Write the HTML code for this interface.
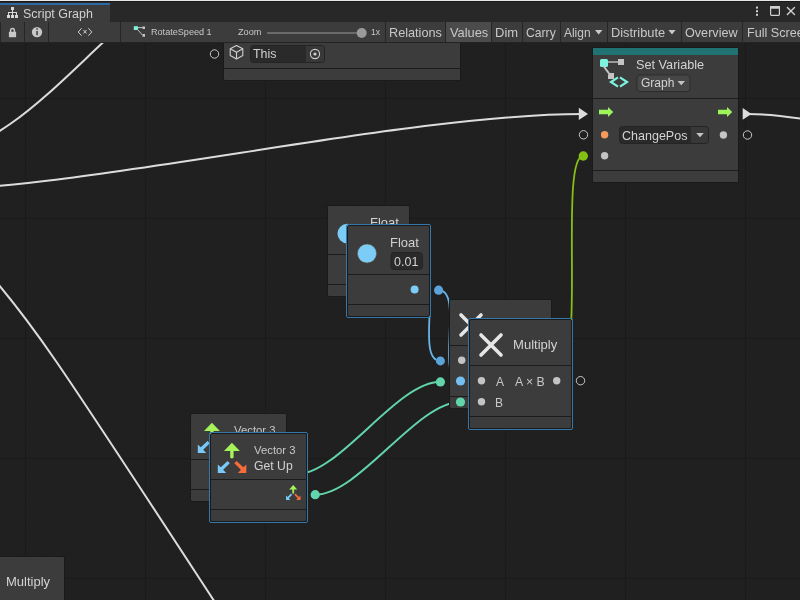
<!DOCTYPE html>
<html><head><meta charset="utf-8">
<style>
*{margin:0;padding:0;box-sizing:border-box}
html,body{width:800px;height:600px;overflow:hidden;background:#202020;font-family:"Liberation Sans",sans-serif;color:#c8c8c8}
.a{position:absolute}
.t{position:absolute;white-space:nowrap;line-height:1;will-change:transform}
svg{position:absolute;left:0;top:0}
.node{position:absolute;background:#3c3c3c;border:1px solid #1a1a1a;border-radius:2px}
.sel{position:absolute;border:1px solid #3479a9;border-radius:2px}
.div{position:absolute;left:0;right:0;height:1px;background:#1c1c1c}
</style></head><body>
<svg width="800" height="600">
<rect x="1" y="0" width="1" height="600" fill="#1f1f1f"/>
<rect x="13" y="0" width="1" height="600" fill="#1f1f1f"/>
<rect x="25" y="0" width="1" height="600" fill="#1a1a1a"/>
<rect x="37" y="0" width="1" height="600" fill="#1f1f1f"/>
<rect x="49" y="0" width="1" height="600" fill="#1f1f1f"/>
<rect x="61" y="0" width="1" height="600" fill="#1f1f1f"/>
<rect x="73" y="0" width="1" height="600" fill="#1f1f1f"/>
<rect x="85" y="0" width="1" height="600" fill="#1f1f1f"/>
<rect x="97" y="0" width="1" height="600" fill="#1f1f1f"/>
<rect x="109" y="0" width="1" height="600" fill="#1f1f1f"/>
<rect x="121" y="0" width="1" height="600" fill="#1f1f1f"/>
<rect x="133" y="0" width="1" height="600" fill="#1f1f1f"/>
<rect x="145" y="0" width="1" height="600" fill="#1a1a1a"/>
<rect x="157" y="0" width="1" height="600" fill="#1f1f1f"/>
<rect x="169" y="0" width="1" height="600" fill="#1f1f1f"/>
<rect x="181" y="0" width="1" height="600" fill="#1f1f1f"/>
<rect x="193" y="0" width="1" height="600" fill="#1f1f1f"/>
<rect x="205" y="0" width="1" height="600" fill="#1f1f1f"/>
<rect x="217" y="0" width="1" height="600" fill="#1f1f1f"/>
<rect x="229" y="0" width="1" height="600" fill="#1f1f1f"/>
<rect x="241" y="0" width="1" height="600" fill="#1f1f1f"/>
<rect x="253" y="0" width="1" height="600" fill="#1f1f1f"/>
<rect x="265" y="0" width="1" height="600" fill="#1a1a1a"/>
<rect x="277" y="0" width="1" height="600" fill="#1f1f1f"/>
<rect x="289" y="0" width="1" height="600" fill="#1f1f1f"/>
<rect x="301" y="0" width="1" height="600" fill="#1f1f1f"/>
<rect x="313" y="0" width="1" height="600" fill="#1f1f1f"/>
<rect x="325" y="0" width="1" height="600" fill="#1f1f1f"/>
<rect x="337" y="0" width="1" height="600" fill="#1f1f1f"/>
<rect x="349" y="0" width="1" height="600" fill="#1f1f1f"/>
<rect x="361" y="0" width="1" height="600" fill="#1f1f1f"/>
<rect x="373" y="0" width="1" height="600" fill="#1f1f1f"/>
<rect x="385" y="0" width="1" height="600" fill="#1a1a1a"/>
<rect x="397" y="0" width="1" height="600" fill="#1f1f1f"/>
<rect x="409" y="0" width="1" height="600" fill="#1f1f1f"/>
<rect x="421" y="0" width="1" height="600" fill="#1f1f1f"/>
<rect x="433" y="0" width="1" height="600" fill="#1f1f1f"/>
<rect x="445" y="0" width="1" height="600" fill="#1f1f1f"/>
<rect x="457" y="0" width="1" height="600" fill="#1f1f1f"/>
<rect x="469" y="0" width="1" height="600" fill="#1f1f1f"/>
<rect x="481" y="0" width="1" height="600" fill="#1f1f1f"/>
<rect x="493" y="0" width="1" height="600" fill="#1f1f1f"/>
<rect x="505" y="0" width="1" height="600" fill="#1a1a1a"/>
<rect x="517" y="0" width="1" height="600" fill="#1f1f1f"/>
<rect x="529" y="0" width="1" height="600" fill="#1f1f1f"/>
<rect x="541" y="0" width="1" height="600" fill="#1f1f1f"/>
<rect x="553" y="0" width="1" height="600" fill="#1f1f1f"/>
<rect x="565" y="0" width="1" height="600" fill="#1f1f1f"/>
<rect x="577" y="0" width="1" height="600" fill="#1f1f1f"/>
<rect x="589" y="0" width="1" height="600" fill="#1f1f1f"/>
<rect x="601" y="0" width="1" height="600" fill="#1f1f1f"/>
<rect x="613" y="0" width="1" height="600" fill="#1f1f1f"/>
<rect x="625" y="0" width="1" height="600" fill="#1a1a1a"/>
<rect x="637" y="0" width="1" height="600" fill="#1f1f1f"/>
<rect x="649" y="0" width="1" height="600" fill="#1f1f1f"/>
<rect x="661" y="0" width="1" height="600" fill="#1f1f1f"/>
<rect x="673" y="0" width="1" height="600" fill="#1f1f1f"/>
<rect x="685" y="0" width="1" height="600" fill="#1f1f1f"/>
<rect x="697" y="0" width="1" height="600" fill="#1f1f1f"/>
<rect x="709" y="0" width="1" height="600" fill="#1f1f1f"/>
<rect x="721" y="0" width="1" height="600" fill="#1f1f1f"/>
<rect x="733" y="0" width="1" height="600" fill="#1f1f1f"/>
<rect x="745" y="0" width="1" height="600" fill="#1a1a1a"/>
<rect x="757" y="0" width="1" height="600" fill="#1f1f1f"/>
<rect x="769" y="0" width="1" height="600" fill="#1f1f1f"/>
<rect x="781" y="0" width="1" height="600" fill="#1f1f1f"/>
<rect x="793" y="0" width="1" height="600" fill="#1f1f1f"/>
<rect x="0" y="2" width="800" height="1" fill="#1f1f1f"/>
<rect x="0" y="14" width="800" height="1" fill="#1f1f1f"/>
<rect x="0" y="26" width="800" height="1" fill="#1f1f1f"/>
<rect x="0" y="38" width="800" height="1" fill="#1f1f1f"/>
<rect x="0" y="50" width="800" height="1" fill="#1f1f1f"/>
<rect x="0" y="62" width="800" height="1" fill="#1f1f1f"/>
<rect x="0" y="74" width="800" height="1" fill="#1f1f1f"/>
<rect x="0" y="86" width="800" height="1" fill="#1f1f1f"/>
<rect x="0" y="98" width="800" height="1" fill="#1a1a1a"/>
<rect x="0" y="110" width="800" height="1" fill="#1f1f1f"/>
<rect x="0" y="122" width="800" height="1" fill="#1f1f1f"/>
<rect x="0" y="134" width="800" height="1" fill="#1f1f1f"/>
<rect x="0" y="146" width="800" height="1" fill="#1f1f1f"/>
<rect x="0" y="158" width="800" height="1" fill="#1f1f1f"/>
<rect x="0" y="170" width="800" height="1" fill="#1f1f1f"/>
<rect x="0" y="182" width="800" height="1" fill="#1f1f1f"/>
<rect x="0" y="194" width="800" height="1" fill="#1f1f1f"/>
<rect x="0" y="206" width="800" height="1" fill="#1f1f1f"/>
<rect x="0" y="218" width="800" height="1" fill="#1a1a1a"/>
<rect x="0" y="230" width="800" height="1" fill="#1f1f1f"/>
<rect x="0" y="242" width="800" height="1" fill="#1f1f1f"/>
<rect x="0" y="254" width="800" height="1" fill="#1f1f1f"/>
<rect x="0" y="266" width="800" height="1" fill="#1f1f1f"/>
<rect x="0" y="278" width="800" height="1" fill="#1f1f1f"/>
<rect x="0" y="290" width="800" height="1" fill="#1f1f1f"/>
<rect x="0" y="302" width="800" height="1" fill="#1f1f1f"/>
<rect x="0" y="314" width="800" height="1" fill="#1f1f1f"/>
<rect x="0" y="326" width="800" height="1" fill="#1f1f1f"/>
<rect x="0" y="338" width="800" height="1" fill="#1a1a1a"/>
<rect x="0" y="350" width="800" height="1" fill="#1f1f1f"/>
<rect x="0" y="362" width="800" height="1" fill="#1f1f1f"/>
<rect x="0" y="374" width="800" height="1" fill="#1f1f1f"/>
<rect x="0" y="386" width="800" height="1" fill="#1f1f1f"/>
<rect x="0" y="398" width="800" height="1" fill="#1f1f1f"/>
<rect x="0" y="410" width="800" height="1" fill="#1f1f1f"/>
<rect x="0" y="422" width="800" height="1" fill="#1f1f1f"/>
<rect x="0" y="434" width="800" height="1" fill="#1f1f1f"/>
<rect x="0" y="446" width="800" height="1" fill="#1f1f1f"/>
<rect x="0" y="458" width="800" height="1" fill="#1a1a1a"/>
<rect x="0" y="470" width="800" height="1" fill="#1f1f1f"/>
<rect x="0" y="482" width="800" height="1" fill="#1f1f1f"/>
<rect x="0" y="494" width="800" height="1" fill="#1f1f1f"/>
<rect x="0" y="506" width="800" height="1" fill="#1f1f1f"/>
<rect x="0" y="518" width="800" height="1" fill="#1f1f1f"/>
<rect x="0" y="530" width="800" height="1" fill="#1f1f1f"/>
<rect x="0" y="542" width="800" height="1" fill="#1f1f1f"/>
<rect x="0" y="554" width="800" height="1" fill="#1f1f1f"/>
<rect x="0" y="566" width="800" height="1" fill="#1f1f1f"/>
<rect x="0" y="578" width="800" height="1" fill="#1a1a1a"/>
<rect x="0" y="590" width="800" height="1" fill="#1f1f1f"/>
</svg>
<svg width="800" height="600" fill="none">
<path d="M-65.4,152.5 C0,152.8 61.3,78.6 122.7,24.6" stroke="#dcdcdc" stroke-width="2"/>
<path d="M-100.6,191.5 C82.6,191.5 399.8,114 583,114" stroke="#dcdcdc" stroke-width="2"/>
<path d="M748,114 C768,114 788,116.3 812,120.5" stroke="#dcdcdc" stroke-width="2"/>
<path d="M-20,263.4 C30.6,318.6 61.8,367.5 222.5,613.8" stroke="#dcdcdc" stroke-width="2"/>
<path d="M560.5,361 C584.5,361 559.3,156 583.3,156" stroke="#86bf14" stroke-width="1.8"/>
<path d="M418.6,269.6 C444.6,269.6 414.4,360.9 440.4,360.9" stroke="#68b4e8" stroke-width="1.8"/>
<path d="M438.6,290.2 C464.6,290.2 434.5,381 460.5,381" stroke="#68b4e8" stroke-width="1.8"/>
<path d="M295.6,474.5 C339.6,474.5 396.4,381.8 440.4,381.8" stroke="#62d6aa" stroke-width="2"/>
<path d="M315.2,494.7 C359.2,494.7 416.5,402 460.5,402" stroke="#62d6aa" stroke-width="2"/>
</svg>
<div class="node" style="left:327px;top:205px;width:83px;height:92px"><div class="div" style="top:48px"></div><div class="div" style="top:78px"></div></div>
<div class="node" style="left:449px;top:299px;width:103px;height:110px"><div class="div" style="top:45px"></div><div class="div" style="top:96px"></div></div>
<div class="node" style="left:190px;top:413px;width:97px;height:89px"><div class="div" style="top:45px"></div><div class="div" style="top:75px"></div></div>
<svg width="800" height="600"><circle cx="347.3" cy="233.6" r="9.8" fill="#7bcdf7"/><path d="M461,315 L481,335 M481,315 L461,335" stroke="#e6e6e6" stroke-width="3.6" stroke-linecap="round"/><circle cx="461.7" cy="360.3" r="3.7" fill="#c4c4c4"/><g><path d="M204,431 L211.9,422.7 L219.9,431 Z" fill="#a6f25a"/><path d="M210.2,430 L213.6,430 L213.6,437.5 Q211.9,439.5 210.2,437.5 Z" fill="#a6f25a"/><path d="M197.8,453 L197.8,444.5 L200.8,447.3 L207.5,441 L209.8,443.3 L203.2,449.8 L206.2,453 Z" fill="#78c9f8"/></g></svg><div class="t" style="left:370.00px;top:217.40px;font-size:12.96px;color:#d2d2d2;">Float</div>
<div class="t" style="left:234.30px;top:424.65px;font-size:10.6px;color:#c8c8c8;transform:scaleX(1.07);transform-origin:0 0;">Vector 3</div>
<svg width="800" height="600"><circle cx="438.6" cy="290.2" r="4.6" fill="#5ba3d9"/><circle cx="440.4" cy="360.9" r="4.5" fill="#5ba3d9"/><circle cx="460.5" cy="381" r="4.6" fill="#72bff0"/><circle cx="440.4" cy="381.9" r="4.6" fill="#62d6aa"/><circle cx="460.5" cy="402" r="4.6" fill="#62d6aa"/><circle cx="315.2" cy="494.7" r="4.6" fill="#62d6aa"/><circle cx="583.3" cy="156" r="4.7" fill="#86bf14"/></svg><div class="node" style="left:223px;top:19px;width:238px;height:62px"><div class="div" style="top:48px"></div></div>
<svg width="800" height="600"><circle cx="214.5" cy="54" r="4.2" fill="none" stroke="#c8c8c8" stroke-width="1"/></svg><div class="node" style="left:592px;top:47px;width:147px;height:136px"><div class="div" style="top:50px"></div><div class="div" style="top:122px"></div></div>
<div class="a" style="left:593px;top:48px;width:145px;height:7px;background:#217272;"></div>
<div class="sel" style="left:346px;top:224px;width:85px;height:94px"></div>
<div class="node" style="left:347px;top:225px;width:83px;height:92px"><div class="div" style="top:48px"></div><div class="div" style="top:78px"></div></div>
<div class="sel" style="left:468px;top:318px;width:105px;height:112px"></div>
<div class="node" style="left:469px;top:319px;width:103px;height:110px"><div class="div" style="top:45px"></div><div class="div" style="top:96px"></div></div>
<div class="sel" style="left:209px;top:432px;width:99px;height:91px"></div>
<div class="node" style="left:210px;top:433px;width:97px;height:89px"><div class="div" style="top:45px"></div><div class="div" style="top:75px"></div></div>
<div class="node" style="left:-4px;top:556px;width:69px;height:52px"></div>
<div class="t" style="left:6.30px;top:574.50px;font-size:13.03px;color:#d2d2d2;">Multiply</div>
<svg width="800" height="600">
<g fill="none" stroke="#d0d0d0" stroke-width="1.1" stroke-linejoin="round"><path d="M236.5,45.5 L242.8,48.8 L242.8,55.6 L236.5,58.9 L230.2,55.6 L230.2,48.8 Z"/><path d="M230.2,48.8 L236.5,52.2 L242.8,48.8 M236.5,52.2 L236.5,58.9"/></g>
<rect x="250.5" y="45.5" width="74" height="17" rx="3" fill="#2a2a2a" stroke="#242424" stroke-width="1"/>
<path d="M306,46 L321.5,46 Q324,46 324,48.5 L324,59.5 Q324,62 321.5,62 L306,62 Z" fill="#383838"/>
<circle cx="315" cy="54" r="4.6" fill="none" stroke="#d0d0d0" stroke-width="1.1"/>
<circle cx="315" cy="54" r="1.6" fill="#d0d0d0"/>
<rect x="600" y="59" width="8" height="8" rx="1.5" fill="#7df2dd"/>
<rect x="618" y="59" width="6" height="6" fill="#c4c4c4"/>
<path d="M608,62 L618,62" stroke="#c4c4c4" stroke-width="1.4"/>
<path d="M603.5,66 L610.5,75.5" stroke="#c4c4c4" stroke-width="2"/>
<path d="M608,75 L610,73 L614,73 L614,79 L608,79 Z" fill="#c4c4c4"/>
<path d="M618,77.4 L611,82 L618,86.6 M620,77.4 L627,82 L620,86.6" fill="none" stroke="#7df2dd" stroke-width="2.2"/>
<rect x="637" y="75" width="53" height="16.5" rx="3" fill="#464646" stroke="#2c2c2c" stroke-width="1"/>
<path d="M677.5,81 L685,81 L681.25,85.2 Z" fill="#c4c4c4"/>
<path d="M599,109.7 L608,109.7 L608,107 L613.2,112 L608,117 L608,114.3 L599,114.3 Z" fill="#9ef55a"/>
<path d="M718,109.7 L727,109.7 L727,107 L732.2,112 L727,117 L727,114.3 L718,114.3 Z" fill="#9ef55a"/>
<path d="M578.8,107.8 L588,114 L578.8,120 Z" fill="#dcdcdc"/>
<path d="M742.7,108 L751.5,114 L742.7,119.8 Z" fill="#dcdcdc"/>
<circle cx="583.5" cy="134.8" r="4.2" fill="none" stroke="#c8c8c8" stroke-width="1"/>
<circle cx="747.5" cy="135" r="4.2" fill="none" stroke="#c8c8c8" stroke-width="1"/>
<circle cx="604.6" cy="134.8" r="3.7" fill="#f59a5a"/>
<circle cx="604.6" cy="155.7" r="3.7" fill="#c4c4c4"/>
<circle cx="723.4" cy="135" r="3.7" fill="#c4c4c4"/>
<rect x="619.5" y="126.5" width="89" height="17" rx="3" fill="#2a2a2a" stroke="#242424" stroke-width="1"/>
<path d="M691,127 L705.5,127 Q708,127 708,129.5 L708,140.5 Q708,143 705.5,143 L691,143 Z" fill="#383838"/>
<path d="M696.2,133 L703.8,133 L700,137.3 Z" fill="#c4c4c4"/>
<circle cx="367" cy="253.5" r="9.6" fill="#7bcdf7" stroke="#5a4a3a" stroke-width="0.6"/>
<rect x="391" y="252.5" width="31.5" height="17" rx="3" fill="#2a2a2a" stroke="#242424" stroke-width="1"/>
<circle cx="414.6" cy="289.6" r="4" fill="#7bcdf7"/>
<path d="M481,335 L501,355 M501,335 L481,355" stroke="#e6e6e6" stroke-width="3.6" stroke-linecap="round"/>
<circle cx="481.5" cy="380.7" r="3.7" fill="#c4c4c4"/>
<circle cx="481.5" cy="401.7" r="3.7" fill="#c4c4c4"/>
<circle cx="556.7" cy="380.7" r="3.7" fill="#c4c4c4"/>
<circle cx="580.5" cy="380.7" r="4.2" fill="none" stroke="#c8c8c8" stroke-width="1"/>
<g><path d="M224,451 L231.9,442.7 L239.9,451 Z" fill="#a6f25a"/><path d="M230.2,450 L233.6,450 L233.6,457.5 Q231.9,459.5 230.2,457.5 Z" fill="#a6f25a"/><path d="M217.8,473 L217.8,464.5 L220.8,467.3 L227.5,461 L229.8,463.3 L223.2,469.8 L226.2,473 Z" fill="#78c9f8"/><path d="M246.3,473 L246.3,464.5 L243.3,467.3 L236.6,461 L234.3,463.3 L240.9,469.8 L237.9,473 Z" fill="#f86b3b"/></g>
<g><path d="M289.2,489.5 L293.2,485 L297.2,489.5 Z" fill="#a6f25a"/><rect x="292.3" y="489" width="1.8" height="4.5" fill="#a6f25a"/><path d="M286,500 L286,495.5 L287.5,497 L291,493.6 L292.2,494.8 L288.8,498.3 L290.3,500 Z" fill="#78c9f8"/><path d="M300.5,500 L300.5,495.5 L299,497 L295.5,493.6 L294.3,494.8 L297.7,498.3 L296.2,500 Z" fill="#f86b3b"/></g>
</svg>
<div class="t" style="left:253.40px;top:48.00px;font-size:12.41px;color:#d0d0d0;">This</div>
<div class="t" style="left:635.80px;top:59.00px;font-size:12.7px;color:#d2d2d2;">Set Variable</div>
<div class="t" style="left:640.50px;top:77.00px;font-size:12.04px;color:#d2d2d2;">Graph</div>
<div class="t" style="left:622.20px;top:130.00px;font-size:12.52px;color:#d2d2d2;">ChangePos</div>
<div class="t" style="left:390.00px;top:237.40px;font-size:12.96px;color:#d2d2d2;">Float</div>
<div class="t" style="left:394.40px;top:256.40px;font-size:12.5px;color:#d2d2d2;">0.01</div>
<div class="t" style="left:512.70px;top:337.80px;font-size:13.07px;color:#d2d2d2;">Multiply</div>
<div class="t" style="left:496.25px;top:376.10px;font-size:12.0px;color:#c8c8c8;">A</div>
<div class="t" style="left:515.00px;top:376.10px;font-size:12.31px;color:#c8c8c8;">A × B</div>
<div class="t" style="left:495.25px;top:397.25px;font-size:12.0px;color:#c8c8c8;">B</div>
<div class="t" style="left:254.30px;top:444.65px;font-size:10.6px;color:#c8c8c8;transform:scaleX(1.07);transform-origin:0 0;">Vector 3</div>
<div class="t" style="left:254.30px;top:459.70px;font-size:12.23px;color:#d2d2d2;">Get Up</div>
<div class="a" style="left:0px;top:0px;width:800px;height:1px;background:#e8e8e8;"></div>
<div class="a" style="left:0px;top:1px;width:800px;height:1px;background:#1a1a1a;"></div>
<div class="a" style="left:0px;top:2px;width:800px;height:20px;background:#282828;"></div>
<div class="a" style="left:0px;top:3px;width:110px;height:19px;background:#3c3c3c;"></div>
<div class="a" style="left:0px;top:3px;width:110px;height:2px;background:#2c6aa6;"></div>
<div class="a" style="left:0px;top:22px;width:800px;height:20px;background:#3c3c3c;"></div>
<div class="a" style="left:0px;top:42px;width:800px;height:1px;background:#232323;"></div>
<div class="a" style="left:446px;top:22px;width:45px;height:20px;background:#4b4b4b;"></div>
<div class="a" style="left:0px;top:22px;width:1px;height:20px;background:#262626;"></div>
<div class="a" style="left:24px;top:22px;width:1px;height:20px;background:#262626;"></div>
<div class="a" style="left:48px;top:22px;width:1px;height:20px;background:#262626;"></div>
<div class="a" style="left:120px;top:22px;width:1px;height:20px;background:#262626;"></div>
<div class="a" style="left:385px;top:22px;width:1px;height:20px;background:#262626;"></div>
<div class="a" style="left:445px;top:22px;width:1px;height:20px;background:#262626;"></div>
<div class="a" style="left:491px;top:22px;width:1px;height:20px;background:#262626;"></div>
<div class="a" style="left:522px;top:22px;width:1px;height:20px;background:#262626;"></div>
<div class="a" style="left:560px;top:22px;width:1px;height:20px;background:#262626;"></div>
<div class="a" style="left:607px;top:22px;width:1px;height:20px;background:#262626;"></div>
<div class="a" style="left:681px;top:22px;width:1px;height:20px;background:#262626;"></div>
<div class="a" style="left:742px;top:22px;width:1px;height:20px;background:#262626;"></div>
<div class="t" style="left:22.60px;top:8.00px;font-size:12.45px;color:#d2d2d2;">Script Graph</div>
<div class="t" style="left:151.20px;top:28.20px;font-size:9.1px;color:#c8c8c8;">RotateSpeed 1</div>
<div class="t" style="left:238.00px;top:27.60px;font-size:9.18px;color:#c8c8c8;">Zoom</div>
<div class="t" style="left:371.30px;top:27.60px;font-size:8.62px;color:#c8c8c8;">1x</div>
<div class="t" style="left:389.40px;top:27.00px;font-size:12.7px;color:#c8c8c8;">Relations</div>
<div class="t" style="left:450.00px;top:27.00px;font-size:12.84px;color:#c8c8c8;">Values</div>
<div class="t" style="left:495.40px;top:26.00px;font-size:12.99px;color:#c8c8c8;">Dim</div>
<div class="t" style="left:525.60px;top:27.00px;font-size:12.18px;color:#c8c8c8;">Carry</div>
<div class="t" style="left:564.40px;top:28.00px;font-size:11.95px;color:#c8c8c8;">Align</div>
<div class="t" style="left:610.60px;top:27.00px;font-size:12.84px;color:#c8c8c8;">Distribute</div>
<div class="t" style="left:685.40px;top:27.00px;font-size:12.62px;color:#c8c8c8;">Overview</div>
<div class="t" style="left:746.60px;top:27.0px;font-size:12.6px;color:#c8c8c8">Full Screen</div><svg width="800" height="600">
<g fill="#d8d8d8"><rect x="11" y="7" width="3" height="3"/><rect x="12" y="10" width="1" height="2"/><rect x="8" y="12" width="9" height="1"/><rect x="8" y="13" width="1" height="2"/><rect x="12" y="13" width="1" height="2"/><rect x="16" y="13" width="1" height="2"/><rect x="7" y="15" width="3" height="3"/><rect x="11" y="15" width="3" height="3"/><rect x="15" y="15" width="3" height="3"/></g>
<path d="M10.6,32 L10.6,30.8 Q10.6,28.6 12.5,28.6 Q14.4,28.6 14.4,30.8 L14.4,32" fill="none" stroke="#c8c8c8" stroke-width="1.5"/>
<rect x="8.9" y="31.8" width="7.2" height="5.4" fill="#c8c8c8"/>
<circle cx="37" cy="32.1" r="5.2" fill="#c8c8c8"/><rect x="36.3" y="28.3" width="1.5" height="1.5" fill="#3c3c3c"/><rect x="36.3" y="31" width="1.5" height="4.2" fill="#3c3c3c"/>
<path d="M81.6,28.3 L78.2,32 L81.6,35.7 M88.4,28.3 L91.8,32 L88.4,35.7 M83.5,30 L86.5,33.5 M86.5,30 L83.5,33.5" fill="none" stroke="#d0d0d0" stroke-width="1"/>
<rect x="133.8" y="26.2" width="4.2" height="3.8" fill="#7df2dd"/><path d="M138,27.6 L143,27.6 M137.5,29.5 L142.5,35" stroke="#c4c4c4" stroke-width="1"/><rect x="142.5" y="26.5" width="2.5" height="2.5" fill="#c4c4c4"/><rect x="142.5" y="34" width="2.5" height="2.8" fill="#c4c4c4"/>
<rect x="267" y="32" width="95" height="2" fill="#6a6a6a"/><circle cx="361.7" cy="33" r="5" fill="#9a9a9a"/>
<path d="M595,30 L602.4,30 L598.7,34.4 Z M668.4,30 L675.6,30 L672,34.4 Z" fill="#c8c8c8"/>
<rect x="756" y="6.6" width="2" height="2" fill="#d0d0d0"/><rect x="756" y="10.2" width="2" height="2" fill="#d0d0d0"/><rect x="756" y="13.8" width="2" height="2" fill="#d0d0d0"/>
<rect x="770.6" y="6.7" width="8.8" height="8.6" rx="0.8" fill="none" stroke="#d0d0d0" stroke-width="1.2"/><rect x="770" y="6.1" width="10" height="2.6" rx="0.8" fill="#d0d0d0"/>
<path d="M787.4,7.5 L794.5,14.6 M794.5,7.5 L787.4,14.6" stroke="#d0d0d0" stroke-width="1.4" stroke-linecap="round"/>
</svg>
</body></html>
